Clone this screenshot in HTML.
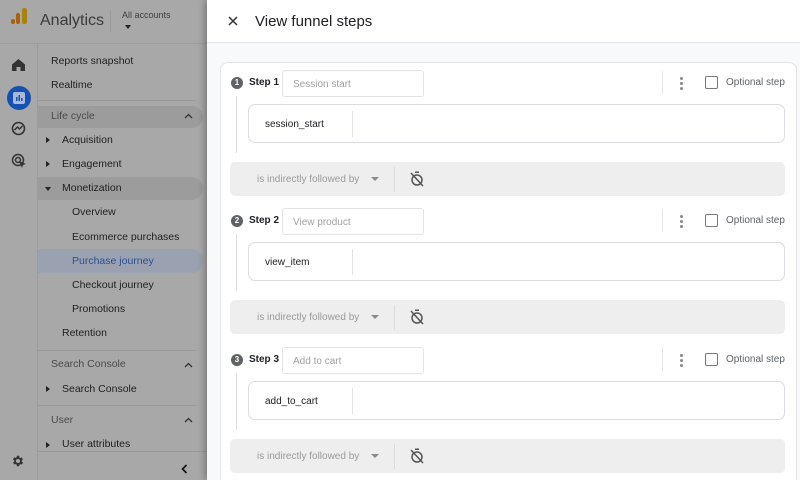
<!DOCTYPE html>
<html style="overflow:hidden"><head><meta charset="utf-8"><style>
*{box-sizing:border-box;margin:0;padding:0}
html,body{width:800px;height:480px;overflow:hidden}
body{font-family:"Liberation Sans",sans-serif;background:#a8a8a8;position:relative}
.abs{position:absolute}
.nav{position:absolute;font-size:10.5px;color:#1f1f1f;white-space:nowrap}
.sec{color:#4a4a4a}
.tri{position:absolute;width:0;height:0;border-top:3px solid transparent;border-bottom:3px solid transparent;border-left:4px solid #222}
.trid{position:absolute;width:0;height:0;border-left:3px solid transparent;border-right:3px solid transparent;border-top:4px solid #222}
.hl{position:absolute;border-radius:0 12px 12px 0;background:#9c9c9c}
.line{position:absolute;height:1px;background:#999;left:38px;width:158px}
.panel{position:absolute;left:207px;top:0;width:593px;height:480px;background:#f8f9fa;box-shadow:-3px 0 6px rgba(0,0,0,.25);overflow:hidden}
.card{position:absolute;left:13px;top:62px;width:577px;height:430px;background:#fff;border:1px solid #e3e3e3;border-radius:8px}
.num{position:absolute;width:12px;height:12px;border-radius:50%;background:#5f6368;color:#fff;font-size:8px;font-weight:bold;text-align:center;line-height:12px}
.stp{position:absolute;font-size:10px;font-weight:bold;color:#202124}
.inp{position:absolute;width:142px;height:27px;border:1px solid #e3e3e3;border-radius:3px;font-size:10px;color:#a0a0a0;padding:8px 10px;white-space:nowrap}
.ev{position:absolute;left:27px;width:537px;height:39px;border:1px solid #dadce0;border-radius:7px}
.ev span{position:absolute;left:16px;top:14px;font-size:10px;color:#202124}
.ev i{position:absolute;left:103px;top:6px;width:1px;height:26px;background:#e3e3e3}
.bar{position:absolute;left:9px;width:555px;height:34px;background:#eeeeee;border-radius:5px}
.bar span{position:absolute;left:27px;top:12px;font-size:10px;color:#9a9a9a;white-space:nowrap}
.bar b{position:absolute;left:141px;top:15px;border-left:4px solid transparent;border-right:4px solid transparent;border-top:4px solid #8a8a8a}
.bar i{position:absolute;left:164px;top:5px;width:1px;height:25px;background:#dcdcdc}
.vl{position:absolute;left:15px;width:1px;background:#dadce0}
.sep{position:absolute;left:441px;width:1px;height:23px;background:#e3e3e3}
.dots{position:absolute;left:459px;width:3px}
.dots i{display:block;width:3px;height:3px;background:#888;border-radius:50%;margin-bottom:2px}
.cb{position:absolute;left:484px;width:13px;height:13px;border:1.5px solid #777;border-radius:2px}
.opt{position:absolute;left:505px;font-size:10px;color:#5f6368;white-space:nowrap}
</style></head><body>
<div class="abs" style="left:0;top:43px;width:800px;height:1px;background:#9c9c9c"></div>
<div class="abs" style="left:37px;top:44px;width:1px;height:436px;background:#9c9c9c"></div>
<div class="abs" style="left:11px;top:19px;width:4px;height:5px;border-radius:2px;background:#a8620f"></div>
<div class="abs" style="left:16px;top:13px;width:4px;height:11px;border-radius:2px;background:#a8620f"></div>
<div class="abs" style="left:22px;top:8px;width:5px;height:16px;border-radius:2px;background:#a8820c"></div>
<div class="abs" style="left:40px;top:12px;font-size:16px;color:#3a3a3a">Analytics</div>
<div class="abs" style="left:110px;top:10px;width:1px;height:22px;background:#999"></div>
<div class="abs" style="left:122px;top:10px;font-size:9px;color:#3f3f3f">All accounts</div>
<div class="trid" style="left:125px;top:25px"></div>
<svg class="abs" style="left:12px;top:59px" width="13" height="12" viewBox="0 0 13 12"><path d="M6.5 0L0 5.5V12h4.5V8h4v4H13V5.5z" fill="#333"/></svg>
<div class="abs" style="left:7px;top:86px;width:24px;height:24px;border-radius:50%;background:#1650b0"></div>
<svg class="abs" style="left:13px;top:92px" width="12" height="12"><rect x="0" y="0" width="12" height="12" rx="2" fill="#a9b9d9"/><rect x="3" y="5" width="1.5" height="4" fill="#1650b0"/><rect x="5.5" y="3" width="1.5" height="6" fill="#1650b0"/><rect x="8" y="6" width="1.5" height="3" fill="#1650b0"/></svg>
<svg class="abs" style="left:11px;top:121px" width="15" height="15" viewBox="0 0 15 15"><circle cx="7.5" cy="7.5" r="6" fill="none" stroke="#333" stroke-width="1.6"/><path d="M3.5 9l3-3 2 2 3-3" fill="none" stroke="#333" stroke-width="1.5"/></svg>
<svg class="abs" style="left:11px;top:153px" width="16" height="16" viewBox="0 0 16 16"><circle cx="7" cy="7" r="5.5" fill="none" stroke="#333" stroke-width="1.5"/><circle cx="7" cy="7" r="2.5" fill="none" stroke="#333" stroke-width="1.5"/><path d="M8 8l7 3-3 1-1 3z" fill="#333"/></svg>
<svg class="abs" style="left:11px;top:454px" width="14" height="14" viewBox="0 0 24 24"><path fill="#333" d="M19.4 13a7.5 7.5 0 000-2l2.1-1.6-2-3.5-2.5 1a7 7 0 00-1.7-1L15 3h-4l-.4 2.7a7 7 0 00-1.7 1l-2.5-1-2 3.5L6.6 11a7.5 7.5 0 000 2l-2.1 1.6 2 3.5 2.5-1a7 7 0 001.7 1L11 21h4l.4-2.7a7 7 0 001.7-1l2.5 1 2-3.5zM13 15.5a3.5 3.5 0 110-7 3.5 3.5 0 010 7z" transform="translate(-1 0)"/></svg>

<div class="nav" style="left:51px;top:55px">Reports snapshot</div>
<div class="nav" style="left:51px;top:79px">Realtime</div>
<div class="line" style="top:100px"></div>
<div class="hl" style="left:38px;top:106px;width:165px;height:22px"></div>
<div class="nav sec" style="left:51px;top:110px">Life cycle</div>
<svg class="abs" style="left:184px;top:113px" width="9" height="6"><path d="M1 5l3.5-3.5L8 5" fill="none" stroke="#333" stroke-width="1.3"/></svg>
<div class="tri" style="left:46px;top:137px"></div><div class="nav" style="left:62px;top:134px">Acquisition</div>
<div class="tri" style="left:46px;top:161px"></div><div class="nav" style="left:62px;top:158px">Engagement</div>
<div class="hl" style="left:38px;top:177px;width:165px;height:23px"></div>
<div class="trid" style="left:45px;top:187px"></div><div class="nav" style="left:62px;top:182px">Monetization</div>
<div class="nav" style="left:72px;top:206px">Overview</div>
<div class="nav" style="left:72px;top:231px">Ecommerce purchases</div>
<div class="hl" style="left:38px;top:249px;width:165px;height:24px;background:#9aa2b1"></div>
<div class="nav" style="left:72px;top:255px;color:#2c4f94">Purchase journey</div>
<div class="nav" style="left:72px;top:279px">Checkout journey</div>
<div class="nav" style="left:72px;top:303px">Promotions</div>
<div class="nav" style="left:62px;top:327px">Retention</div>
<div class="line" style="top:350px"></div>
<div class="nav sec" style="left:51px;top:358px">Search Console</div>
<svg class="abs" style="left:184px;top:362px" width="9" height="6"><path d="M1 5l3.5-3.5L8 5" fill="none" stroke="#333" stroke-width="1.3"/></svg>
<div class="tri" style="left:46px;top:386px"></div><div class="nav" style="left:62px;top:383px">Search Console</div>
<div class="line" style="top:405px"></div>
<div class="nav sec" style="left:51px;top:414px">User</div>
<svg class="abs" style="left:184px;top:417px" width="9" height="6"><path d="M1 5l3.5-3.5L8 5" fill="none" stroke="#333" stroke-width="1.3"/></svg>
<div class="abs" style="left:38px;top:436px;width:169px;height:15px;overflow:hidden"><div class="tri" style="left:8px;top:6px"></div><div class="nav" style="left:24px;top:2px">User attributes</div></div>
<div class="abs" style="left:38px;top:451px;width:169px;height:1px;background:#999"></div>
<svg class="abs" style="left:181px;top:464px" width="7" height="10"><path d="M5.5 1L1.5 5l4 4" fill="none" stroke="#111" stroke-width="1.6"/></svg>

<div class="panel">
<div class="abs" style="left:0;top:0;width:593px;height:43px;background:#fff;border-bottom:1px solid #e3e3e3"></div>
<svg class="abs" style="left:21px;top:16px" width="10" height="10"><path d="M1 1l8 8M9 1L1 9" stroke="#333" stroke-width="1.5"/></svg>
<div class="abs" style="left:48px;top:13px;font-size:15px;color:#202124">View funnel steps</div>
<div class="card">
<div class="num" style="left:10px;top:14px">1</div><div class="stp" style="left:28px;top:14px">Step 1</div>
<div class="inp" style="left:61px;top:7px">Session start</div>
<div class="sep" style="top:8px"></div><div class="dots" style="top:14px"><i></i><i></i><i></i></div>
<div class="cb" style="top:13px"></div><div class="opt" style="top:14px">Optional step</div>
<div class="vl" style="top:33px;height:57px"></div>
<div class="ev" style="top:41px"><span>session_start</span><i></i></div>
<div class="bar" style="top:99px"><span>is indirectly followed by</span><b></b><i></i>
<svg style="position:absolute;left:180px;top:9px" width="14" height="16" viewBox="0 0 14 16"><rect x="5" y="0.5" width="4" height="1.5" fill="#555"/><circle cx="7" cy="9" r="5" fill="none" stroke="#555" stroke-width="1.5"/><path d="M1 2l12 13" stroke="#555" stroke-width="1.5"/></svg></div>

<div class="num" style="left:10px;top:152px">2</div><div class="stp" style="left:28px;top:152px">Step 2</div>
<div class="inp" style="left:61px;top:145px">View product</div>
<div class="sep" style="top:146px"></div><div class="dots" style="top:152px"><i></i><i></i><i></i></div>
<div class="cb" style="top:151px"></div><div class="opt" style="top:152px">Optional step</div>
<div class="vl" style="top:171px;height:57px"></div>
<div class="ev" style="top:179px"><span>view_item</span><i></i></div>
<div class="bar" style="top:237px"><span>is indirectly followed by</span><b></b><i></i>
<svg style="position:absolute;left:180px;top:9px" width="14" height="16" viewBox="0 0 14 16"><rect x="5" y="0.5" width="4" height="1.5" fill="#555"/><circle cx="7" cy="9" r="5" fill="none" stroke="#555" stroke-width="1.5"/><path d="M1 2l12 13" stroke="#555" stroke-width="1.5"/></svg></div>

<div class="num" style="left:10px;top:291px">3</div><div class="stp" style="left:28px;top:291px">Step 3</div>
<div class="inp" style="left:61px;top:284px">Add to cart</div>
<div class="sep" style="top:285px"></div><div class="dots" style="top:291px"><i></i><i></i><i></i></div>
<div class="cb" style="top:290px"></div><div class="opt" style="top:291px">Optional step</div>
<div class="vl" style="top:310px;height:57px"></div>
<div class="ev" style="top:318px"><span>add_to_cart</span><i></i></div>
<div class="bar" style="top:376px"><span>is indirectly followed by</span><b></b><i></i>
<svg style="position:absolute;left:180px;top:9px" width="14" height="16" viewBox="0 0 14 16"><rect x="5" y="0.5" width="4" height="1.5" fill="#555"/><circle cx="7" cy="9" r="5" fill="none" stroke="#555" stroke-width="1.5"/><path d="M1 2l12 13" stroke="#555" stroke-width="1.5"/></svg></div>
</div>
</div>
</body></html>
